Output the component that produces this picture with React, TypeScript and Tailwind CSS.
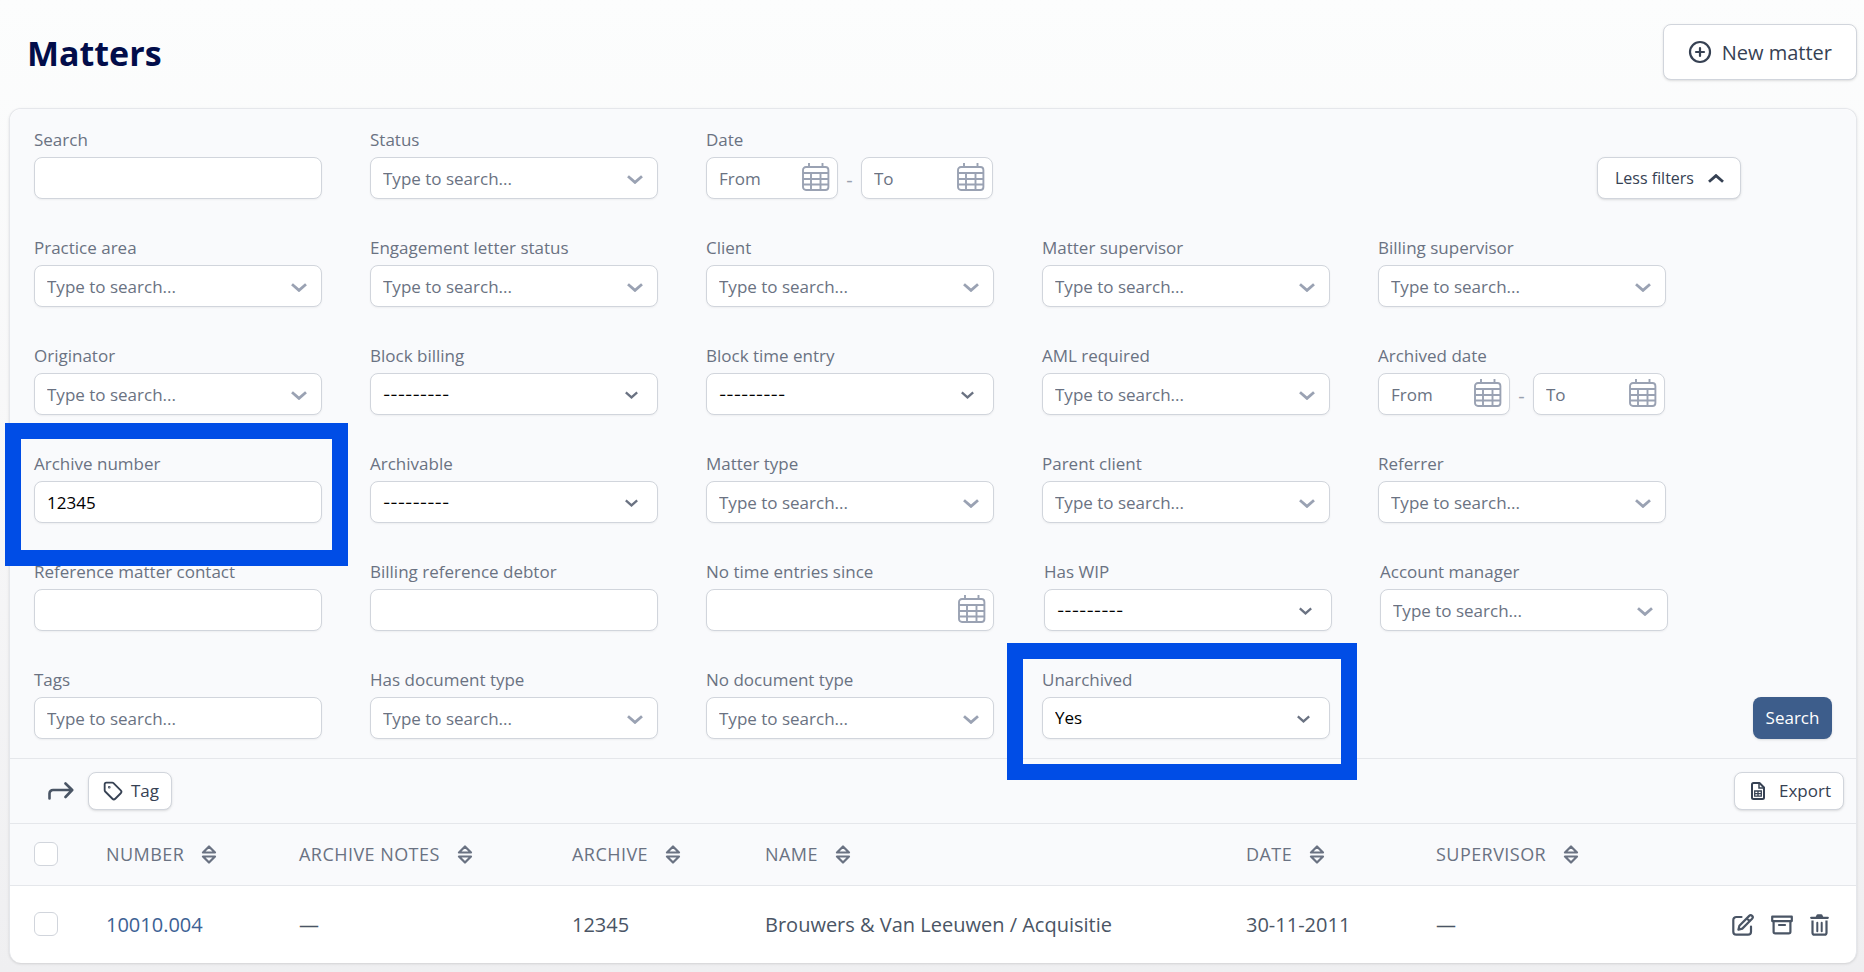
import { useState } from "react";
import { CirclePlus, Tag } from "lucide-react";

const boxClass =
  "h-[42px] w-full rounded-lg border border-gray-300 bg-white px-3 text-black shadow-xs placeholder:text-gray-500 focus:outline-none focus:ring-2 focus:ring-blue-500";

const buttonClass =
  "flex items-center rounded-lg border border-gray-300 bg-white text-gray-700 shadow-sm hover:bg-gray-50";

type FieldDef = {
  label: string;
  kind: "text" | "combo" | "select" | "date" | "range" | "tags";
  value?: string;
  highlight?: "archive" | "unarchived";
};

const filterRows: FieldDef[][] = [
  [
    { label: "Search", kind: "text" },
    { label: "Status", kind: "combo" },
    { label: "Date", kind: "range" },
  ],
  [
    { label: "Practice area", kind: "combo" },
    { label: "Engagement letter status", kind: "combo" },
    { label: "Client", kind: "combo" },
    { label: "Matter supervisor", kind: "combo" },
    { label: "Billing supervisor", kind: "combo" },
  ],
  [
    { label: "Originator", kind: "combo" },
    { label: "Block billing", kind: "select" },
    { label: "Block time entry", kind: "select" },
    { label: "AML required", kind: "combo" },
    { label: "Archived date", kind: "range" },
  ],
  [
    { label: "Archive number", kind: "text", value: "12345", highlight: "archive" },
    { label: "Archivable", kind: "select" },
    { label: "Matter type", kind: "combo" },
    { label: "Parent client", kind: "combo" },
    { label: "Referrer", kind: "combo" },
  ],
  [
    { label: "Reference matter contact", kind: "text" },
    { label: "Billing reference debtor", kind: "text" },
    { label: "No time entries since", kind: "date" },
    { label: "Has WIP", kind: "select" },
    { label: "Account manager", kind: "combo" },
  ],
  [
    { label: "Tags", kind: "tags" },
    { label: "Has document type", kind: "combo" },
    { label: "No document type", kind: "combo" },
    { label: "Unarchived", kind: "select", value: "Yes", highlight: "unarchived" },
  ],
];

const columns = [
  { label: "Number", width: "w-[193px]" },
  { label: "Archive notes", width: "w-[273px]" },
  { label: "Archive", width: "w-[193px]" },
  { label: "Name", width: "w-[481px]" },
  { label: "Date", width: "w-[190px]" },
  { label: "Supervisor", width: "" },
];

function Chevron({ className }: { className: string }) {
  return (
    <svg className={className} viewBox="0 0 16 9" fill="none" aria-hidden="true">
      <path d="M1 1.200 8 7.400l7-6.200" stroke="currentColor" strokeWidth="2.8" />
    </svg>
  );
}

function CalendarIcon() {
  return (
    <svg
      className="pointer-events-none absolute right-2 top-1.5 h-7 w-7 text-[#9aa2b3]"
      viewBox="0 0 28 28"
      fill="none"
      stroke="currentColor"
      strokeWidth="1.9"
      aria-hidden="true"
    >
      <rect x="1" y="4" width="25.400" height="23" rx="3" />
      <path d="M7 0v4M20.500 0v4M1 10h25.400M1 16h25.400M1 21.500h25.400M9 10v17M18.500 10v17" />
    </svg>
  );
}

function SortIcon() {
  return (
    <svg className="h-[19px] w-4" viewBox="0 0 16 19" fill="none" stroke="currentColor" strokeWidth="2.2" strokeLinejoin="round" aria-hidden="true">
      <path d="M8 1.500 2 7.500h12zM8 17.500 2 11.500h12z" />
    </svg>
  );
}

function ArrowIcon() {
  return (
    <svg className="h-[18px] w-[26px]" viewBox="0 0 26 18" fill="none" stroke="currentColor" strokeWidth="2.6" strokeLinecap="round" strokeLinejoin="round" aria-hidden="true">
      <path d="M1.500 16.500v-5a3.500 3.500 0 0 1 3.500-3.500H24M17.500 1.500 24.200 8l-6.700 7" />
    </svg>
  );
}

function SheetIcon() {
  return (
    <svg className="h-[18px] w-3.5" viewBox="0 0 14 18" fill="none" stroke="currentColor" strokeWidth="2" aria-hidden="true">
      <path strokeLinejoin="round" d="M8.500 1H2.500A1.500 1.500 0 0 0 1 2.500v13A1.500 1.500 0 0 0 2.500 17h9a1.500 1.500 0 0 0 1.500-1.500V5.500z" />
      <path strokeWidth="1.500" d="M8 1.500V6h4.500" />
      <path strokeWidth="1.300" d="M3.700 9h6.600v5.200H3.700zM7 9v5.200M3.700 11.600h6.600" />
    </svg>
  );
}

function EditIcon() {
  return (
    <svg className="size-[22px]" viewBox="0 0 22 22" fill="none" stroke="currentColor" strokeWidth="2.2" strokeLinecap="round" strokeLinejoin="round" aria-hidden="true">
      <path d="M9.500 3H4.300a3 3 0 0 0-3 3v11.700a3 3 0 0 0 3 3H16a3 3 0 0 0 3-3v-5.200" />
      <path d="M17.200 1.900a2 2 0 0 1 2.900 2.900L10.300 14.600l-3.900 1.100 1-4zM14.800 4.300l2.900 2.900" />
    </svg>
  );
}

function ArchiveIcon() {
  return (
    <svg className="size-[22px]" viewBox="0 0 22 22" fill="none" stroke="currentColor" strokeWidth="2.2" strokeLinejoin="round" aria-hidden="true">
      <path d="M1.200 2.700h19.600v4.400H1.200zM2.600 7.100v10.700a1.600 1.600 0 0 0 1.600 1.600h13.600a1.600 1.600 0 0 0 1.600-1.600V7.100" />
      <path strokeLinecap="round" d="M8 11h6" />
    </svg>
  );
}

function TrashIcon() {
  return (
    <svg className="h-[22px] w-[19px]" viewBox="0 0 19 22" fill="none" stroke="currentColor" strokeWidth="2.2" aria-hidden="true">
      <path strokeLinecap="round" d="M1.200 3.800h16.600" />
      <path fill="currentColor" stroke="none" d="M5.500 3.500 6.700.8Q7 .2 7.700.2h3.600q.7 0 1 .6l1.200 2.700z" />
      <path d="M2.500 6.500v12.200a2 2 0 0 0 2 2h10a2 2 0 0 0 2-2V6.500" />
      <path strokeWidth="2" strokeLinecap="round" d="M7.300 8.800v8.400M11.700 8.800v8.400" />
    </svg>
  );
}

function DateInput({ id, placeholder, label }: { id: string; placeholder?: string; label?: string }) {
  return (
    <div className="relative min-w-0 flex-1">
      <input id={id} type="text" placeholder={placeholder} aria-label={label} className={`${boxClass} text-[17px]`} />
      <CalendarIcon />
    </div>
  );
}

function Control({ field, id }: { field: FieldDef; id: string }) {
  const [value, setValue] = useState(field.value ?? "");

  if (field.kind === "range") {
    return (
      <div className="flex w-[287px] items-center">
        <DateInput id={id} placeholder="From" />
        <span className="w-[23px] pt-1 text-center text-xl leading-6 text-gray-400">-</span>
        <DateInput id={`${id}-to`} placeholder="To" label={`${field.label} to`} />
      </div>
    );
  }

  if (field.kind === "date") {
    return (
      <div className="flex pr-0.5">
        <DateInput id={id} />
      </div>
    );
  }

  if (field.kind === "select") {
    return (
      <div className="relative">
        <select
          id={id}
          value={value}
          onChange={(e) => setValue(e.target.value)}
          className={`${boxClass} appearance-none ${value ? "text-[17px]" : "font-['Inter',sans-serif] text-base"}`}
        >
          <option value="">---------</option>
          <option value="Yes">Yes</option>
          <option value="No">No</option>
        </select>
        <Chevron className="pointer-events-none absolute right-5 top-[18px] h-2 w-[13px] text-gray-500" />
      </div>
    );
  }

  return (
    <div className="relative">
      <input
        id={id}
        type="text"
        value={value}
        onChange={(e) => setValue(e.target.value)}
        placeholder={field.kind === "text" ? undefined : "Type to search..."}
        className={`${boxClass} text-[17px]`}
      />
      {field.kind === "combo" && (
        <Chevron className="pointer-events-none absolute right-[15px] top-[18px] h-[9px] w-4 text-[#9aa2b3]" />
      )}
    </div>
  );
}

function Field({ field }: { field: FieldDef }) {
  const id = field.label.toLowerCase().replace(/ /g, "-");
  return (
    <div className={`relative ${field.kind === "date" ? "w-[290px]" : "w-72"}`}>
      <label htmlFor={id} className="mb-[5px] block text-[17px] leading-6 text-gray-500">
        {field.label}
      </label>
      <Control field={field} id={id} />
      {field.highlight === "archive" && (
        <div className="pointer-events-none absolute -bottom-[43px] -left-[29px] -right-[26px] -top-[29px] z-10 border-16 border-[#004de6]" />
      )}
      {field.highlight === "unarchived" && (
        <div className="pointer-events-none absolute -bottom-[41px] -left-[35px] -right-[27px] -top-[25px] z-10 border-16 border-[#004de6]" />
      )}
    </div>
  );
}

export default function App() {
  const [selected, setSelected] = useState(false);

  return (
    <div className="min-h-screen bg-linear-to-b from-[#fcfdfd] via-[#f7f7f8] to-[#efeff1] pb-[9px] pl-[9px] pr-[7px] pt-6 font-['Open_Sans','Noto_Sans',sans-serif]">
      <header className="mb-7 flex items-center justify-between">
        <h1 className="pl-[18px] pt-0.5 text-[34px] font-bold leading-10 text-[#020d4a]">Matters</h1>
        <button type="button" className={`${buttonClass} h-14 gap-2.5 px-6 text-xl`}>
          <CirclePlus className="size-6" strokeWidth={2.2} />
          <span className="pt-0.5">New matter</span>
        </button>
      </header>

      <main className="rounded-xl border border-b-0 border-gray-200 bg-white shadow-sm">
        <form
          className="flex items-end gap-3 rounded-t-xl border-b border-gray-200 bg-[#f9fafc] px-6 py-[19px]"
          onSubmit={(e) => e.preventDefault()}
        >
          <div className="flex flex-1 flex-col gap-[37px]">
            {filterRows.map((row, i) => (
              <div key={i} className="flex items-end gap-x-12">
                {row.map((field) => (
                  <Field key={field.label} field={field} />
                ))}
                {i === 0 && (
                  <button type="button" className={`${buttonClass} ml-auto h-[42px] gap-3.5 pl-[17px] pr-4 text-base`}>
                    Less filters
                    <Chevron className="h-[9px] w-4 rotate-180" />
                  </button>
                )}
              </div>
            ))}
          </div>
          <button
            type="submit"
            className="h-[42px] w-[79px] rounded-lg bg-[#3d5d8b] text-[17px] text-white shadow-sm hover:bg-[#34507a]"
          >
            Search
          </button>
        </form>

        <div className="flex items-center justify-between border-b border-gray-200 bg-[#f9fafc] py-[13px] pl-[38px] pr-3">
          <div className="flex items-center gap-3.5">
            <button type="button" aria-label="Apply to selected" className="text-gray-600">
              <ArrowIcon />
            </button>
            <button type="button" className={`${buttonClass} h-[38px] gap-2 pl-3.5 pr-3 text-[17px]`}>
              <Tag className="size-5" strokeWidth={2.2} />
              Tag
            </button>
          </div>
          <button type="button" className={`${buttonClass} h-[38px] gap-3.5 pl-4 pr-3 text-[17px]`}>
            <SheetIcon />
            Export
          </button>
        </div>

        <table className="w-full table-fixed text-left">
          <thead className="bg-[#f9fafc] text-gray-500">
            <tr className="h-[61px] border-b border-gray-200">
              <th className="w-24 pl-6">
                <input type="checkbox" aria-label="Select all" className="block size-6 appearance-none rounded-md border border-gray-300 bg-white" />
              </th>
              {columns.map((column) => (
                <th key={column.label} className={`${column.width} text-lg font-normal uppercase tracking-wide`}>
                  <div className="flex items-center gap-[17px]">
                    {column.label}
                    <SortIcon />
                  </div>
                </th>
              ))}
              <th className="w-[140px]" aria-label="Actions" />
            </tr>
          </thead>
          <tbody className="text-xl text-gray-600">
            <tr className="h-[78px]">
              <td className="pl-6">
                <input
                  type="checkbox"
                  aria-label="Select 10010.004"
                  checked={selected}
                  onChange={(e) => setSelected(e.target.checked)}
                  className="block size-6 appearance-none rounded-md border border-gray-300 bg-white checked:bg-[#3d5d8b]"
                />
              </td>
              <td className="pt-0.5">
                <a href="#10010.004" className="text-[#3d6194] hover:underline">
                  10010.004
                </a>
              </td>
              <td className="pt-0.5">—</td>
              <td className="pt-0.5">12345</td>
              <td className="pt-0.5">Brouwers &amp; Van Leeuwen / Acquisitie</td>
              <td className="pt-0.5">30-11-2011</td>
              <td className="pt-0.5">—</td>
              <td className="pt-0.5">
                <div className="flex items-center justify-end gap-[17px] pr-[27px]">
                  <button type="button" aria-label="Edit">
                    <EditIcon />
                  </button>
                  <button type="button" aria-label="Archive">
                    <ArchiveIcon />
                  </button>
                  <button type="button" aria-label="Delete">
                    <TrashIcon />
                  </button>
                </div>
              </td>
            </tr>
          </tbody>
        </table>
      </main>
    </div>
  );
}
